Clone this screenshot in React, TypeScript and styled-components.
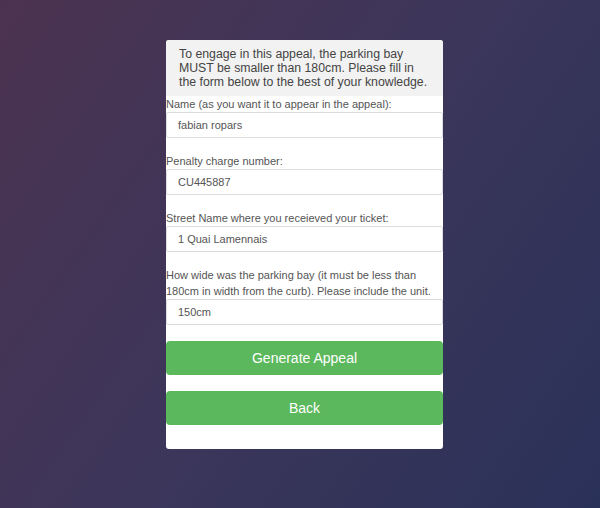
import styled, { createGlobalStyle } from 'styled-components';

const GlobalStyle = createGlobalStyle`
  html, body {
    margin: 0;
    height: 100%;
  }
  body {
    font-family: "Liberation Sans", Arial, sans-serif;
    background: linear-gradient(125deg, #4b3250 0%, #3c365a 50%, #2a3159 100%);
    background-attachment: fixed;
  }
`;

interface FieldProps {
  label: string,
  value: string,
}

function Field({ label, value }: FieldProps) {
  return (
    <Group>
      <Label>{label}</Label>
      <Input defaultValue={value} />
    </Group>
  );
}

export default function App() {
  return (
    <>
      <GlobalStyle />
      <Page>
        <Card>
          <Notice>
            To engage in this appeal, the parking bay MUST be smaller than 180cm. Please fill in
            the form below to the best of your knowledge.
          </Notice>
          <Field label="Name (as you want it to appear in the appeal):" value="fabian ropars" />
          <Field label="Penalty charge number:" value="CU445887" />
          <Field label="Street Name where you receieved your ticket:" value="1 Quai Lamennais" />
          <Field
            label="How wide was the parking bay (it must be less than 180cm in width from the curb). Please include the unit."
            value="150cm" />
          <Actions>
            <Button>Generate Appeal</Button>
            <Button>Back</Button>
          </Actions>
        </Card>
      </Page>
    </>
  );
}

const Page = styled.div`
  min-height: 508px;
  display: flex;
  justify-content: center;
  align-items: flex-start;
  padding: 40px 0 0 9px;
  box-sizing: border-box;
`;

const Card = styled.div`
  width: 277px;
  background: #fff;
  border-radius: 3px;
  overflow: hidden;
  padding-bottom: 24px;
  display: flex;
  flex-direction: column;
`;

const Notice = styled.div`
  background: #f2f2f2;
  color: #444;
  font-size: 12.3px;
  line-height: 14px;
  padding: 7px 12px 7px 13px;
`;

const Group = styled.div`
  display: flex;
  flex-direction: column;
  margin-bottom: 15px;
`;

const Label = styled.label`
  color: #555;
  font-size: 11px;
  line-height: 16px;
`;

const Input = styled.input`
  box-sizing: border-box;
  width: 100%;
  height: 26px;
  margin: 0;
  padding: 0 11px;
  border: 1px solid #dcdcdc;
  border-radius: 2px;
  color: #555;
  font-family: "Liberation Sans", Arial, sans-serif;
  font-size: 11px;
  outline: none;
`;

const Actions = styled.div`
  display: flex;
  flex-direction: column;
  gap: 16px;
  margin-top: 1px;
`;

const Button = styled.button`
  height: 34px;
  border: none;
  border-radius: 4px;
  background: #5cb85c;
  color: #fff;
  font-family: "Liberation Sans", Arial, sans-serif;
  font-size: 14px;
  cursor: pointer;
`;
